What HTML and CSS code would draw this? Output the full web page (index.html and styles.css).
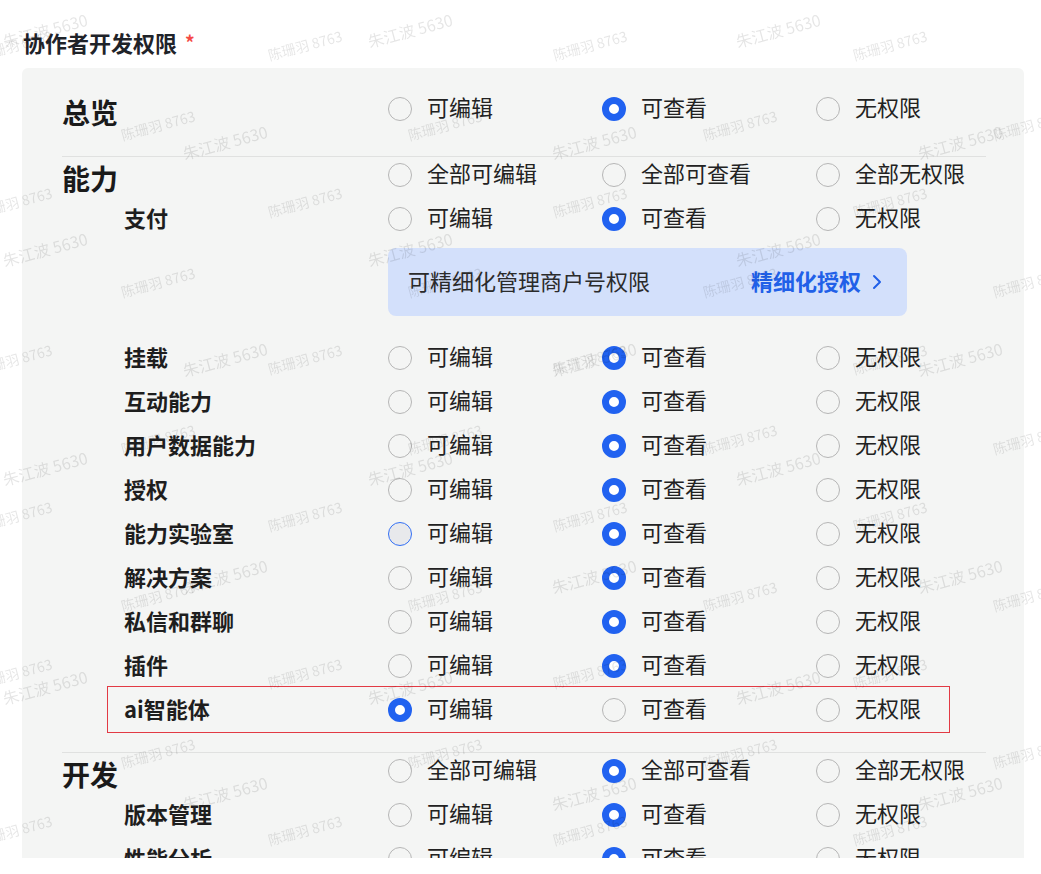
FILE: index.html
```html
<!DOCTYPE html>
<html lang="zh-CN">
<head>
<meta charset="UTF-8">
<meta name="viewport" content="width=device-width, initial-scale=1.0">
<title>协作者开发权限</title>
<link rel="stylesheet" href="styles.css">
</head>
<body>

<div class="field-title">协作者开发权限<span class="required">*</span></div>

<div class="perm-panel">

  <!-- 总览 -->
  <section class="perm-group perm-group--first">
    <div class="perm-row perm-row--head">
      <div class="group-name">总览</div>
      <label class="radio"><span class="dot"></span>可编辑</label>
      <label class="radio"><span class="dot checked"></span>可查看</label>
      <label class="radio"><span class="dot"></span>无权限</label>
    </div>
  </section>

  <!-- 能力 -->
  <section class="perm-group">
    <div class="perm-row perm-row--head">
      <div class="group-name">能力</div>
      <label class="radio"><span class="dot"></span>全部可编辑</label>
      <label class="radio"><span class="dot"></span>全部可查看</label>
      <label class="radio"><span class="dot"></span>全部无权限</label>
    </div>
    <div class="perm-row">
      <div class="item-name">支付</div>
      <label class="radio"><span class="dot"></span>可编辑</label>
      <label class="radio"><span class="dot checked"></span>可查看</label>
      <label class="radio"><span class="dot"></span>无权限</label>
    </div>
    <div class="merchant-tip">
      <span>可精细化管理商户号权限</span>
      <a class="tip-link">精细化授权
        <svg width="10" height="16" viewBox="0 0 10 16"><path d="M2 2l6 6-6 6" fill="none" stroke="currentColor" stroke-width="2" stroke-linecap="round" stroke-linejoin="round"/></svg>
      </a>
    </div>
    <div class="perm-row">
      <div class="item-name">挂载</div>
      <label class="radio"><span class="dot"></span>可编辑</label>
      <label class="radio"><span class="dot checked"></span>可查看</label>
      <label class="radio"><span class="dot"></span>无权限</label>
    </div>
    <div class="perm-row">
      <div class="item-name">互动能力</div>
      <label class="radio"><span class="dot"></span>可编辑</label>
      <label class="radio"><span class="dot checked"></span>可查看</label>
      <label class="radio"><span class="dot"></span>无权限</label>
    </div>
    <div class="perm-row">
      <div class="item-name">用户数据能力</div>
      <label class="radio"><span class="dot"></span>可编辑</label>
      <label class="radio"><span class="dot checked"></span>可查看</label>
      <label class="radio"><span class="dot"></span>无权限</label>
    </div>
    <div class="perm-row">
      <div class="item-name">授权</div>
      <label class="radio"><span class="dot"></span>可编辑</label>
      <label class="radio"><span class="dot checked"></span>可查看</label>
      <label class="radio"><span class="dot"></span>无权限</label>
    </div>
    <div class="perm-row">
      <div class="item-name">能力实验室</div>
      <label class="radio"><span class="dot hover"></span>可编辑</label>
      <label class="radio"><span class="dot checked"></span>可查看</label>
      <label class="radio"><span class="dot"></span>无权限</label>
    </div>
    <div class="perm-row">
      <div class="item-name">解决方案</div>
      <label class="radio"><span class="dot"></span>可编辑</label>
      <label class="radio"><span class="dot checked"></span>可查看</label>
      <label class="radio"><span class="dot"></span>无权限</label>
    </div>
    <div class="perm-row">
      <div class="item-name">私信和群聊</div>
      <label class="radio"><span class="dot"></span>可编辑</label>
      <label class="radio"><span class="dot checked"></span>可查看</label>
      <label class="radio"><span class="dot"></span>无权限</label>
    </div>
    <div class="perm-row">
      <div class="item-name">插件</div>
      <label class="radio"><span class="dot"></span>可编辑</label>
      <label class="radio"><span class="dot checked"></span>可查看</label>
      <label class="radio"><span class="dot"></span>无权限</label>
    </div>
    <div class="perm-row perm-row--marked">
      <div class="item-name">ai智能体</div>
      <label class="radio"><span class="dot checked"></span>可编辑</label>
      <label class="radio"><span class="dot"></span>可查看</label>
      <label class="radio"><span class="dot"></span>无权限</label>
    </div>
  </section>

  <!-- 开发 -->
  <section class="perm-group">
    <div class="perm-row perm-row--head">
      <div class="group-name">开发</div>
      <label class="radio"><span class="dot"></span>全部可编辑</label>
      <label class="radio"><span class="dot checked"></span>全部可查看</label>
      <label class="radio"><span class="dot"></span>全部无权限</label>
    </div>
    <div class="perm-row">
      <div class="item-name">版本管理</div>
      <label class="radio"><span class="dot"></span>可编辑</label>
      <label class="radio"><span class="dot checked"></span>可查看</label>
      <label class="radio"><span class="dot"></span>无权限</label>
    </div>
    <div class="perm-row">
      <div class="item-name">性能分析</div>
      <label class="radio"><span class="dot"></span>可编辑</label>
      <label class="radio"><span class="dot checked"></span>可查看</label>
      <label class="radio"><span class="dot"></span>无权限</label>
    </div>
  </section>
</div>

<!-- 水印 -->
<div id="watermark" class="watermark"></div>

<script>
document.addEventListener("DOMContentLoaded", () => {
  const layer = document.getElementById("watermark");

  // 水印网格
  const grids = [
    { text: "陈珊羽 8763", cls: "wm-small", xs: [15, 305, 590, 890], y0: 45, step: 157, n: 6 },
    { text: "陈珊羽 8763", cls: "wm-small", xs: [158, 445, 740, 1030], y0: 125, step: 157, n: 5 },
    { text: "朱江波 5630", cls: "wm-large", xs: [45, 410, 778], y0: 30, step: 219, n: 4 },
    { text: "朱江波 5630", cls: "wm-large", xs: [225, 594, 960], y0: 142, step: 217, n: 4 },
  ];

  grids.forEach((g) => {
    g.xs.forEach((x) => {
      for (let i = 0; i < g.n; i++) {
        const s = document.createElement("span");
        s.className = "wm " + g.cls;
        s.textContent = g.text;
        s.style.left = x + "px";
        s.style.top = (g.y0 + g.step * i) + "px";
        layer.appendChild(s);
      }
    });
  });
});
</script>
</body>
</html>
```

FILE: styles.css
```css
body {
  margin: 0;
  padding: 28px 17px 0 22px;
  background: #fff;
  font-family: "Noto Sans CJK SC", "Noto Sans", sans-serif;
  color: #222;
  overflow: hidden;
}
.field-title {
  margin-left: 1px;
  font-size: 22px;
  line-height: 28px;
  font-weight: 600;
  color: #1f2329;
  display: flex;
  align-items: flex-start;
}
.required {
  color: #f54a45;
  font-size: 19px;
  line-height: 20px;
  font-weight: 700;
  margin-left: 8px;
  margin-top: 4px;
}
.perm-panel {
  margin-top: 12px;
  height: 790px;
  overflow: hidden;
  background: #f4f5f4;
  border-radius: 6px 6px 0 0;
  padding: 0 38px 0 40px;
}
.perm-group {
  border-top: 1px solid #e0e1e0;
  padding-bottom: 20px;
}
.perm-group--first {
  border-top: none;
  padding-top: 23px;
  padding-bottom: 25px;
}
.perm-row {
  display: grid;
  grid-template-columns: 326px 214px 214px 1fr;
  grid-template-rows: 44px;
  align-items: center;
  position: relative;
}
.perm-row--head {
  grid-template-rows: 36px;
  margin-bottom: 4px;
}
.group-name {
  font-size: 28px;
  font-weight: 700;
  color: #1a1a1a;
  padding-top: 5px;
  line-height: 36px;
}
.item-name {
  padding-left: 62px;
  padding-bottom: 5px;
  font-size: 22px;
  font-weight: 600;
  color: #1e1e1e;
}
.radio {
  display: flex;
  align-items: center;
  gap: 15px;
  font-size: 22px;
  color: #222;
  line-height: 30px;
  padding-bottom: 6px;
}
.dot {
  width: 24px;
  height: 24px;
  margin-top: 6px;
  box-sizing: border-box;
  border-radius: 50%;
  border: 1.5px solid #b6b6b6;
  flex-shrink: 0;
}
.dot.checked {
  border: 7px solid #2162f0;
  background: #fff;
}
.dot.hover {
  border-color: #3370f5;
  background: #e8e9ec;
}
.perm-row--marked::after {
  content: "";
  position: absolute;
  top: -2px;
  bottom: -1px;
  left: 45px;
  right: 36px;
  border: 1px solid #e23a44;
}
.merchant-tip {
  margin: 7px 0 20px 326px;
  width: 519px;
  height: 68px;
  box-sizing: border-box;
  padding: 0 25px 4px 20px;
  background: #d3e0fb;
  border-radius: 8px;
  display: flex;
  align-items: center;
  justify-content: space-between;
  font-size: 22px;
  color: #2b2b2b;
}
.tip-link {
  display: flex;
  align-items: center;
  gap: 11px;
  color: #2160e8;
  font-weight: 700;
}
.tip-link svg {
  margin-top: 4px;
}
.watermark {
  position: fixed;
  inset: 0;
  pointer-events: none;
  overflow: hidden;
}
.wm {
  position: absolute;
  white-space: nowrap;
  transform: translate(-50%, -50%) rotate(-15deg);
  color: rgba(0, 0, 0, 0.1);
  font-family: "Noto Sans CJK SC", sans-serif;
}
.wm-small {
  font-size: 14px;
}
.wm-large {
  font-size: 16px;
}
```
